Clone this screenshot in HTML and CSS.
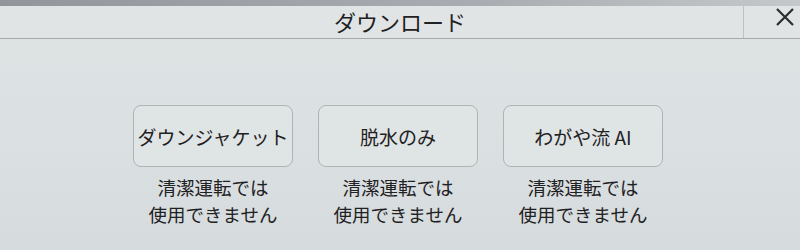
FILE: index.html
```html
<!DOCTYPE html>
<html lang="ja">
<head>
<meta charset="utf-8">
<link rel="stylesheet" href="styles.css">
</head>
<body>
<div class="screen">
  <div class="bezel"></div>
  <header class="header">
    <div class="title">ダウンロード</div>
    <div class="close">
      <svg width="20" height="20" viewBox="0 0 20 20"><path d="M2 2 L18 18 M18 2 L2 18" stroke="#2a2c2e" stroke-width="2.2" fill="none"/></svg>
    </div>
  </header>
  <main class="options">
    <div class="option">
      <div class="btn">ダウンジャケット</div>
      <div class="note">清潔運転では<br>使用できません</div>
    </div>
    <div class="option">
      <div class="btn">脱水のみ</div>
      <div class="note">清潔運転では<br>使用できません</div>
    </div>
    <div class="option">
      <div class="btn">わがや流 AI</div>
      <div class="note">清潔運転では<br>使用できません</div>
    </div>
  </main>
</div>
</body>
</html>
```
FILE: styles.css
```css
html, body {
  margin: 0;
  padding: 0;
}
body {
  width: 800px;
  height: 250px;
  overflow: hidden;
  background: #d9dee0;
  font-family: "Noto Sans CJK JP", "Noto Sans", sans-serif;
  color: #1f2123;
}
.screen {
  width: 800px;
  height: 250px;
  background: linear-gradient(180deg, #dfe4e5 0%, #dadfe1 60%, #d6dbdd 100%);
}
.bezel {
  height: 6px;
  background: linear-gradient(90deg, #92969a, #a9adb1 60%, #c4c8cb);
}
.header {
  display: flex;
  height: 32px;
  border-bottom: 1px solid #a3a8aa;
  background: #e0e4e5;
}
.title {
  flex: 1;
  text-align: center;
  font-size: 22px;
  line-height: 30px;
  padding-left: 57px;
}
.close {
  width: 57px;
  border-left: 1px solid #bcc1c3;
  display: flex;
  align-items: center;
  justify-content: flex-end;
  padding-right: 5px;
  padding-bottom: 10px;
  box-sizing: border-box;
}
.options {
  display: flex;
  gap: 25px;
  padding: 66px 0 0 133px;
}
.option {
  width: 160px;
  display: flex;
  flex-direction: column;
  align-items: center;
}
.btn {
  width: 160px;
  height: 62px;
  box-sizing: border-box;
  border: 1.5px solid #aeb3b5;
  border-radius: 8px;
  background: #dfe4e5;
  display: flex;
  align-items: center;
  justify-content: center;
  font-size: 19px;
}
.note {
  margin-top: 7px;
  text-align: center;
  font-size: 18.5px;
  line-height: 27px;
}
```
